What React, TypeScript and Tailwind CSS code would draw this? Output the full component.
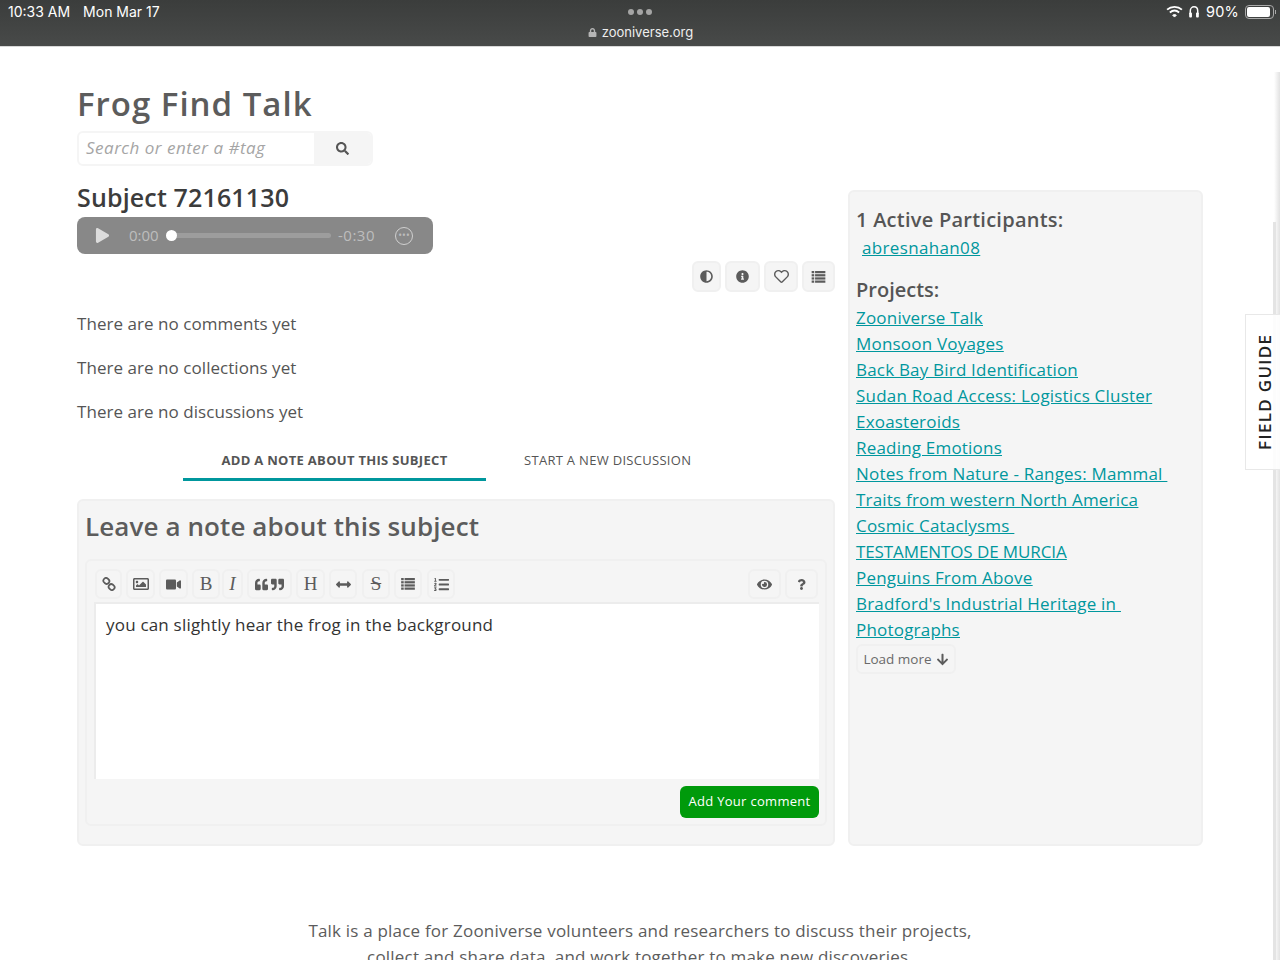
import {
  FaAdjust,
  FaArrowDown,
  FaArrowsAltH,
  FaEye,
  FaInfoCircle,
  FaListOl,
  FaLock,
  FaPlay,
  FaQuestion,
  FaQuoteLeft,
  FaQuoteRight,
  FaRegHeart,
  FaRegImage,
  FaSearch,
  FaVideo,
} from "react-icons/fa";
import { clsx } from "clsx";

const projects = [
  ["Zooniverse Talk"],
  ["Monsoon Voyages"],
  ["Back Bay Bird Identification"],
  ["Sudan Road Access: Logistics Cluster"],
  ["Exoasteroids"],
  ["Reading Emotions"],
  ["Notes from Nature - Ranges: Mammal ", "Traits from western North America"],
  ["Cosmic Cataclysms "],
  ["TESTAMENTOS DE MURCIA"],
  ["Penguins From Above"],
  ["Bradford's Industrial Heritage in ", "Photographs"],
];

const ChainIcon = () => (
  <svg viewBox="0 0 16 16" className="size-[14px]" fill="none" stroke="currentColor" strokeWidth="2">
    <rect x="1.5" y="1.5" width="7" height="6" rx="3" transform="rotate(40 5 4.5)" />
    <rect x="7.5" y="8.5" width="7" height="6" rx="3" transform="rotate(40 11 11.5)" />
  </svg>
);

const StackedListIcon: React.FunctionComponent<{ className: string }> = ({ className }) => (
  <svg viewBox="0 0 16 14" className={className} fill="currentColor">
    <rect x="0" y="0" width="3" height="2.6" />
    <rect x="4" y="0" width="12" height="2.6" />
    <rect x="0" y="3.7" width="3" height="2.6" />
    <rect x="4" y="3.7" width="12" height="2.6" />
    <rect x="0" y="7.4" width="3" height="2.6" />
    <rect x="4" y="7.4" width="12" height="2.6" />
    <rect x="0" y="11.1" width="3" height="2.6" />
    <rect x="4" y="11.1" width="12" height="2.6" />
  </svg>
);

const ToolButton: React.FunctionComponent<{
  width: string;
  height?: string;
  children: React.ReactNode;
  serif?: boolean;
}> = ({ width, height = "h-[30px]", children, serif }) => (
  <button
    className={clsx(
      "flex items-center justify-center rounded-md border-2 border-[#f0f0f0] bg-[#f5f5f5] text-[#5c5c5c]",
      serif && "font-['Liberation_Serif',serif] text-[19px]",
      height,
      width
    )}
  >
    {children}
  </button>
);

const StatusBar = () => (
  <div className="relative h-[47px] border-b border-[#d8d8d8] bg-gradient-to-b from-[#3b3d3c] to-[#484a49] font-['Inter',sans-serif] text-white">
    <div className="flex h-[23px] items-center justify-between pl-2 pr-[4px] text-[14px]">
      <div className="flex gap-[13px]">
        <span>10:33 AM</span>
        <span>Mon Mar 17</span>
      </div>
      <div className="flex items-center">
        <svg viewBox="0 0 18 14" className="h-[13px] w-[17px]" fill="none" stroke="white" strokeWidth="2">
          <path d="M1 5 C5.5 1 12.5 1 17 5" />
          <path d="M4 8 C7 5.6 11 5.6 14 8" />
          <path d="M7 11 L9 13 L11 11 C10 10 8 10 7 11 Z" fill="white" strokeWidth="1" />
        </svg>
        <svg viewBox="0 0 12 14" className="ml-[5px] h-[13px] w-[12px]" fill="none" stroke="white" strokeWidth="1.6">
          <path d="M2 10 V6.5 C2 0.5 10 0.5 10 6.5 V10" />
          <rect x="0.8" y="8" width="3" height="5.4" rx="1" fill="white" strokeWidth="0" />
          <rect x="8.2" y="8" width="3" height="5.4" rx="1" fill="white" strokeWidth="0" />
        </svg>
        <span className="ml-[6px] text-[14.5px] tracking-[0.2px]">90%</span>
        <div className="ml-[6px] flex items-center">
          <div className="h-[14px] w-[29px] rounded-[4px] border border-[#aaa] p-[1px]">
            <div className="h-full w-[90%] rounded-[2px] bg-white" />
          </div>
          <div className="ml-[1px] h-[4px] w-[1px] bg-[#aaa]" />
        </div>
      </div>
    </div>
    <div className="absolute left-1/2 top-[9px] flex -translate-x-1/2 gap-[3px]">
      <span className="size-[6px] rounded-full bg-[#a5a5a5]" />
      <span className="size-[6px] rounded-full bg-[#a5a5a5]" />
      <span className="size-[6px] rounded-full bg-[#a5a5a5]" />
    </div>
    <div className="flex items-center justify-center gap-[5px] pl-[1px] text-[13px] text-[#eeeeee]">
      <FaLock className="size-[9px] text-[#b5b5b5]" />
      <span>zooniverse.org</span>
    </div>
  </div>
);

const AudioPlayer = () => (
  <div className="flex h-[37px] w-[356px] items-center rounded-lg bg-[#888888] pl-[18px] text-[15px] text-[#bdbdbd]">
    <FaPlay className="size-[15px] text-[#dcdcdc]" />
    <span className="ml-[19px] w-[40px]">0:00</span>
    <div className="relative h-[5px] w-[162px] rounded-full bg-[#9d9d9d]">
      <div className="absolute -left-[3px] -top-[3px] size-[11px] rounded-full bg-white" />
    </div>
    <span className="ml-[7px] w-[37px] whitespace-nowrap tracking-[0.5px]">-0:30</span>
    <div className="ml-[20px] flex h-[18px] w-[18px] items-center justify-center rounded-full border border-[#d0d0d0] text-[10px] leading-none">
      <span className="-mt-[2px]">•••</span>
    </div>
  </div>
);

const Editor = () => (
  <div className="mt-[14px] rounded-md border-2 border-[#f0f0f0] pb-[6px] pl-[7px] pr-[6px] pt-[8px]">
    <div className="ml-[1px] mr-[1px] flex items-center gap-[4px]">
      <ToolButton width="w-[27px]">
        <ChainIcon />
      </ToolButton>
      <ToolButton width="w-[29px]">
        <FaRegImage className="size-[16px]" />
      </ToolButton>
      <ToolButton width="w-[29px]">
        <FaVideo className="size-[15px]" />
      </ToolButton>
      <ToolButton width="w-[28px]" serif>
        B
      </ToolButton>
      <ToolButton width="-ml-[2px] w-[21px]" serif>
        <i>I</i>
      </ToolButton>
      <ToolButton width="w-[45px]">
        <FaQuoteLeft className="size-[13px]" />
        <FaQuoteRight className="ml-[3px] size-[13px]" />
      </ToolButton>
      <ToolButton width="w-[29px]" serif>
        H
      </ToolButton>
      <ToolButton width="w-[28px]">
        <FaArrowsAltH className="size-[15px]" />
      </ToolButton>
      <ToolButton width="ml-[1px] w-[28px]" serif>
        <s>S</s>
      </ToolButton>
      <ToolButton width="w-[28px]">
        <StackedListIcon className="h-[12px] w-[14px]" />
      </ToolButton>
      <ToolButton width="ml-[1px] w-[28px]">
        <FaListOl className="size-[15px]" />
      </ToolButton>
      <ToolButton width="ml-auto w-[33px]">
        <FaEye className="size-[15px]" />
      </ToolButton>
      <ToolButton width="w-[33px]">
        <FaQuestion className="size-[11px]" />
      </ToolButton>
    </div>
    <div className="mt-[3px] h-[177px] border-l-2 border-t-2 border-[#ececec] bg-white px-[10px] py-[8px] text-[17px] leading-[26px] tracking-[0.2px] text-[#333333]">
      you can slightly hear the frog in the background
    </div>
    <div className="mt-[7px] flex justify-end">
      <button className="h-[32px] w-[139px] rounded-md bg-[#009a0b] text-[13px] tracking-[0.3px] text-white">
        Add Your comment
      </button>
    </div>
  </div>
);

export default function App() {
  return (
    <div className="relative h-[960px] overflow-hidden bg-white font-['Open_Sans',sans-serif]">
      <StatusBar />

      <div className="pl-[77px] pr-[77px] pt-[35px]">
        <h1 className="text-[33px] font-semibold leading-[44px] tracking-[1px] text-[#5c5c5c]">Frog Find Talk</h1>
        <div className="mt-[5px] flex h-[35px] w-[296px] overflow-hidden rounded-md border-2 border-[#f5f5f5]">
          <div className="flex-1 px-[7px] text-[17px] italic leading-[30px] tracking-[0.5px] text-[#a5a5a5]">
            Search or enter a #tag
          </div>
          <div className="flex w-[57px] items-center justify-center bg-[#f5f5f5]">
            <FaSearch className="size-[13px] text-[#555555]" />
          </div>
        </div>

        <div className="mt-[24px] flex items-start gap-[13px]">
          <div className="w-[758px]">
            <h2 className="-mt-[10px] text-[25px] font-semibold leading-[34px] tracking-[0.15px] text-[#3c3c3c]">
              Subject 72161130
            </h2>
            <div className="mt-[3px]">
              <AudioPlayer />
            </div>

            <div className="mt-[7px] flex justify-end gap-[4px]">
              <ToolButton width="w-[29px]" height="h-[31px]">
                <FaAdjust className="size-[13px]" />
              </ToolButton>
              <ToolButton width="w-[35px]" height="h-[31px]">
                <FaInfoCircle className="size-[13px]" />
              </ToolButton>
              <ToolButton width="w-[34px]" height="h-[31px]">
                <FaRegHeart className="size-[15px]" />
              </ToolButton>
              <ToolButton width="w-[33px]" height="h-[31px]">
                <StackedListIcon className="h-[12px] w-[15px]" />
              </ToolButton>
            </div>

            <div className="mt-[19px] flex flex-col gap-[18px] text-[17px] leading-[26px] tracking-[0.05px] text-[#555555]">
              <p>There are no comments yet</p>
              <p>There are no collections yet</p>
              <p>There are no discussions yet</p>
            </div>

            <div className="mt-[22px] flex pl-[106px] text-[13px] leading-[18px] tracking-[0.3px] text-[#555555]">
              <div className="w-[303px] border-b-[3px] border-[#00979d] pb-[9px] pt-[4px] text-center font-bold">
                ADD A NOTE ABOUT THIS SUBJECT
              </div>
              <div className="ml-[38px] pt-[4px]">START A NEW DISCUSSION</div>
            </div>

            <div className="mt-[18px] h-[347px] rounded-md border-2 border-[#f0f0f0] bg-[#f5f5f5] px-[6px] pt-[6px]">
              <h3 className="text-[26px] font-semibold leading-[38px] tracking-[0.1px] text-[#5c5c5c]">
                Leave a note about this subject
              </h3>
              <Editor />
            </div>
          </div>

          <div className="h-[656px] w-[355px] rounded-md border-2 border-[#f0f0f0] bg-[#f5f5f5] px-[6px] pt-[14px]">
            <h4 className="text-[20px] font-semibold leading-[28px] tracking-[0.25px] text-[#555555]">
              1 Active Participants:
            </h4>
            <a href="#" className="ml-[6px] block text-[17px] leading-[28px] tracking-[0.35px] text-[#00979d] underline">
              abresnahan08
            </a>
            <h4 className="mt-[14px] text-[20px] font-semibold leading-[28px] text-[#555555]">Projects:</h4>
            <div className="mt-[1px] text-[17px] leading-[26px] tracking-[0.2px] text-[#00979d] underline">
              {projects.map((lines) =>
                lines.map((line) => (
                  <a
                    key={line}
                    href="#"
                    className={clsx("block whitespace-pre", line === "TESTAMENTOS DE MURCIA" && "tracking-[-0.1px]")}
                  >
                    {line}
                  </a>
                ))
              )}
            </div>
            <button className="mt-[1px] flex h-[30px] w-[100px] items-center justify-center gap-[4px] rounded-md border-2 border-[#f0f0f0] text-[13.5px] text-[#6a6a6a]">
              Load more
              <FaArrowDown className="size-[13px] text-[#5c5c5c]" />
            </button>
          </div>
        </div>

        <p className="mx-auto mt-[72px] w-[680px] text-center text-[17px] leading-[26px] tracking-[0.2px] text-[#5c5c5c]">
          Talk is a place for Zooniverse volunteers and researchers to discuss their projects, collect and share data,
          and work together to make new discoveries.
        </p>
      </div>

      <div className="absolute right-0 top-[72px] h-[900px] w-[6px] bg-gradient-to-r from-white to-[#e2e2e2]" />
      <div className="absolute right-[4px] top-[222px] h-[740px] w-[3px] bg-[#e4e4e4]" />
      <div className="absolute right-0 top-[314px] flex h-[156px] w-[35px] items-center justify-center border border-r-0 border-[#e8e8e8] bg-white/90 pl-[4px]">
        <span className="-rotate-90 whitespace-nowrap text-[17px] font-semibold tracking-[1.3px] text-[#222222]">
          FIELD GUIDE
        </span>
      </div>
    </div>
  );
}
